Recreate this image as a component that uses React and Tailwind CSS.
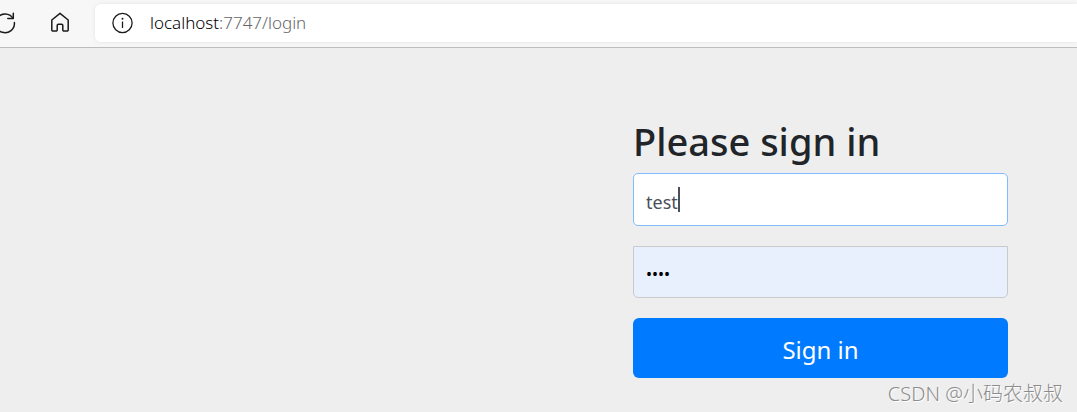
function ReloadIcon() {
  return (
    <svg className="h-6 w-6" viewBox="0 0 24 24" fill="none" stroke="currentColor" strokeWidth="1.5" strokeLinecap="round" strokeLinejoin="round">
      <path d="M21 7.3A9.4 9.4 0 1 0 22.4 11.5" />
      <path d="M21.3 2.2v5.3h-5.5" />
    </svg>
  );
}

function HomeIcon() {
  return (
    <svg className="h-6 w-6" viewBox="0 0 24 24" fill="none" stroke="currentColor" strokeWidth="1.5" strokeLinejoin="round">
      <path d="M12 2.3 20.2 9V18.9a1.2 1.2 0 0 1-1.2 1.2h-3a1.2 1.2 0 0 1-1.2-1.2v-4.5a1.2 1.2 0 0 0-1.2-1.2h-3.2a1.2 1.2 0 0 0-1.2 1.2v4.5A1.2 1.2 0 0 1 8 20.1H5a1.2 1.2 0 0 1-1.2-1.2V9Z" />
    </svg>
  );
}

function InfoIcon() {
  return (
    <svg className="h-6 w-6 shrink-0" viewBox="0 0 24 24" fill="none" stroke="currentColor" strokeWidth="1.3">
      <circle cx="12.5" cy="12" r="9.6" />
      <path d="M12.5 10.5v6.5" />
      <circle cx="12.5" cy="7.8" r="1" fill="currentColor" stroke="none" />
    </svg>
  );
}

function BrowserBar() {
  return (
    <header className="flex h-12 items-center overflow-hidden border-b border-[#bdbdbd] bg-[#f7f7f7] pb-0.5 text-[#1b1b1b]">
      <button type="button" aria-label="Reload" className="-ml-2 shrink-0">
        <ReloadIcon />
      </button>
      <button type="button" aria-label="Home" className="ml-8 shrink-0">
        <HomeIcon />
      </button>
      <div className="ml-[23px] flex h-[38px] flex-1 items-center gap-4 rounded-l-md bg-white pl-[15px] shadow-[0_0_4px_rgba(0,0,0,0.08)]">
        <InfoIcon />
        <span className="text-[17px] leading-6 font-light text-[#666]">
          <span className="text-black">localhost</span>:7747/login
        </span>
      </div>
    </header>
  );
}

function LoginForm() {
  return (
    <form className="flex w-[375px] flex-col" onSubmit={(e) => e.preventDefault()}>
      <h2 className="mb-2 text-[38px] leading-12 font-medium whitespace-nowrap text-[#212529]">Please sign in</h2>
      <div className="relative mb-5">
        <input
          type="text"
          aria-label="Username"
          defaultValue="test"
          className="h-[53px] w-full rounded-[5px] border border-[#80bdff] bg-white px-3 pt-1 text-lg text-[#495057] outline-none"
        />
        <span className="absolute top-3.5 left-[45px] h-[25px] w-0.5 bg-[#495057]" />
      </div>
      <input
        type="password"
        aria-label="Password"
        defaultValue="pass"
        className="mb-5 h-[52px] w-full rounded-b-[5px] border border-[#c8cacd] bg-[#e8f0fe] px-3 pt-1 text-base text-black outline-none"
      />
      <button type="submit" className="h-[60px] rounded-md bg-[#007bff] pt-1 text-2xl text-white">
        Sign in
      </button>
    </form>
  );
}

export default function App() {
  return (
    <div className="flex min-h-screen flex-col bg-[#eee] font-['Noto_Sans','Noto_Sans_CJK_SC',sans-serif]">
      <BrowserBar />
      <main className="flex justify-end pt-[69px] pr-[69px]">
        <LoginForm />
      </main>
      <footer className="flex justify-end pr-[14px] text-xl leading-8 font-light text-[#8c8c8c] [text-shadow:1px_1px_0_#fff]">
        CSDN @小码农叔叔
      </footer>
    </div>
  );
}
